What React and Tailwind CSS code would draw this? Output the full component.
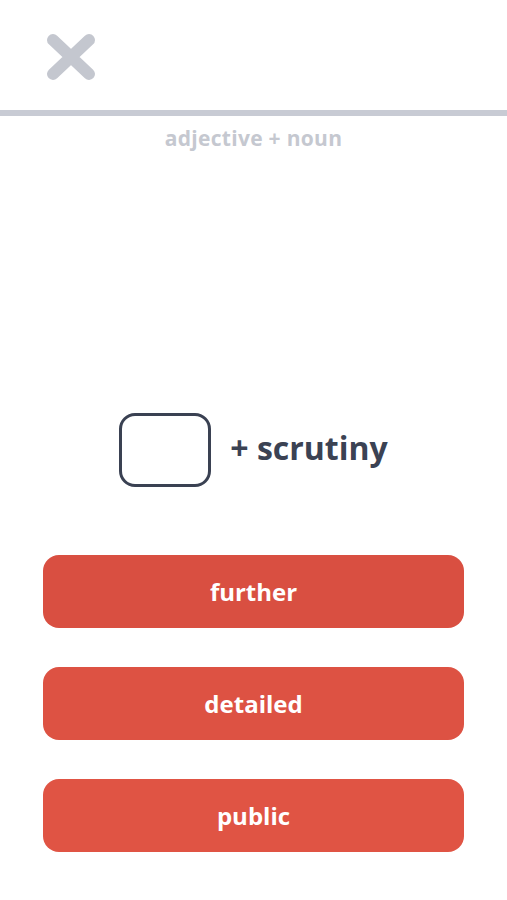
import React from 'react';

const options = [
    { label: 'further', color: 'bg-[#d94f41]' },
    { label: 'detailed', color: 'bg-[#dd5243]' },
    { label: 'public', color: 'bg-[#e05444]' },
];

const App = () => {
    return (
        <div
            className="min-h-[900px] w-full bg-white flex flex-col"
            style={{ fontFamily: '"Open Sans", "Noto Sans", sans-serif' }}
        >
            <div className="h-[110px] pl-[45px] pt-[32px]">
                <svg width="52" height="50" viewBox="0 0 52 50" fill="none">
                    <path d="M8 8 L44 42 M44 8 L8 42" stroke="#c4c7cf" strokeWidth="12" strokeLinecap="round" />
                </svg>
            </div>
            <div className="h-[6px] bg-[#c8cbd4]" />
            <p className="mt-[8px] text-center text-[21px] leading-[28px] font-bold tracking-[0.3px] text-[#c5c8d0]">adjective + noun</p>

            <div className="mt-[261px] flex items-center justify-center gap-[19px]">
                <div className="w-[92px] h-[74px] rounded-[16px] border-[3px] border-[#3a4152]" />
                <span className="text-[32px] leading-none font-bold text-[#3b4253] -mt-[4px]">+ scrutiny</span>
            </div>

            <div className="mt-[68px] px-[43px] flex flex-col gap-[39px]">
                {options.map((o) => (
                    <button
                        key={o.label}
                        className={`${o.color} h-[73px] w-full rounded-[16px] text-white text-[24px] font-bold`}
                    >
                        {o.label}
                    </button>
                ))}
            </div>
        </div>
    );
};

export default App;
